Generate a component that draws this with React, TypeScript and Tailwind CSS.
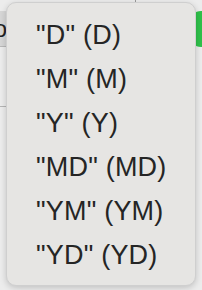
import React from 'react'

const options = ['D', 'M', 'Y', 'MD', 'YM', 'YD']

export default function App() {
  return (
    <div className="relative w-[202px] h-[290px] overflow-hidden bg-[#ececec]" style={{ fontFamily: '"Liberation Sans", Arial, sans-serif' }}>
      {/* Background form row behind the menu */}
      <div className="pt-[11px] flex items-start justify-between">
        <div className="w-[30px] h-[36px] -ml-[20px] bg-[#d6d6d6] border-b border-[#b8b8b8] flex items-center justify-end pr-[3px] text-[24px] text-[#222]">
          o
        </div>
        <div className="w-[22px] h-[36px] -mr-[10px] rounded-full bg-[#2fc14a]" />
      </div>
      <div className="w-[8px] h-px bg-[#b5b5b5] mt-[59px]" />
      <div className="absolute left-[135px] top-0 w-px h-[3px] bg-[#9a9a9a]" />

      {/* Popup menu */}
      <div className="absolute left-[6px] top-[2px] w-[190px] h-[284px] rounded-[10px] bg-[#e6e5e3] border border-[#cfcfcf] shadow-[0_2px_6px_rgba(0,0,0,0.18)] pt-[10px] pb-[9px]">
        {options.map((o) => (
          <div key={o} className="h-[44px] flex items-center pl-[29px] text-[27px] leading-none text-[#252525] tracking-[0.2px]">
            "{o}" ({o})
          </div>
        ))}
      </div>
    </div>
  )
}
